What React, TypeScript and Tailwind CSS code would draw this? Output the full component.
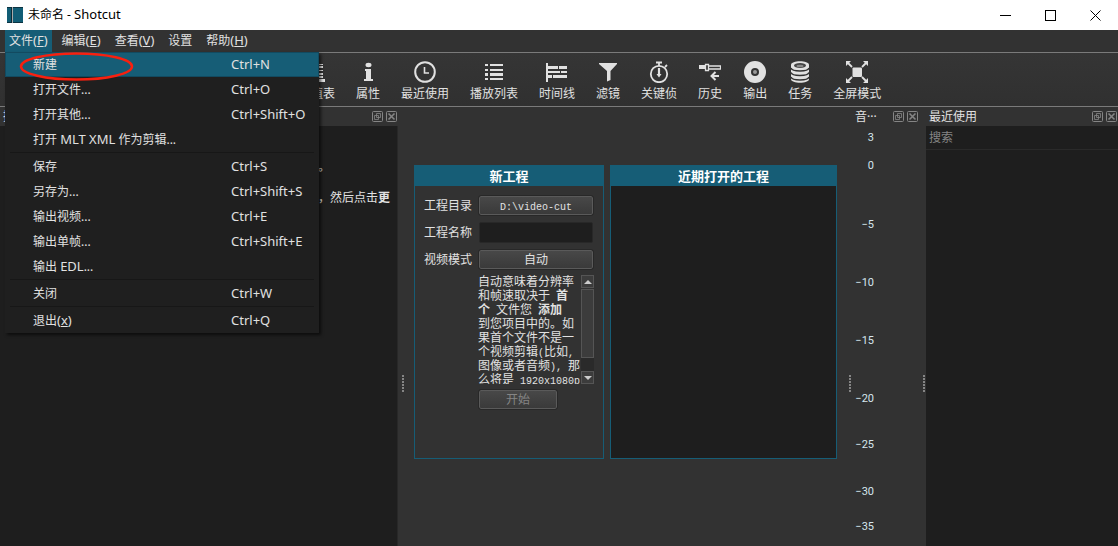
import type { ReactNode } from 'react'

interface MenuEntry {
  label: ReactNode
  shortcut?: string
  mnemonic?: string
}

// Latin runs are set one pixel larger than the Chinese text around them
function Latin({ children }: { children: ReactNode }) {
  return <span className="text-[13px] leading-none">{children}</span>
}

function Mono({ children }: { children: ReactNode }) {
  return <span className="whitespace-pre font-['Liberation_Mono',monospace] text-[10px] leading-none">{children}</span>
}

const menuBar = [
  { label: '文件', key: 'F' },
  { label: '编辑', key: 'E' },
  { label: '查看', key: 'V' },
  { label: '设置' },
  { label: '帮助', key: 'H' }
]

const fileMenu: MenuEntry[][] = [
  [
    { label: '新建', shortcut: 'Ctrl+N' },
    { label: '打开文件...', shortcut: 'Ctrl+O' },
    { label: '打开其他...', shortcut: 'Ctrl+Shift+O' },
    { label: <>打开 <Latin>MLT XML</Latin> 作为剪辑...</> }
  ],
  [
    { label: '保存', shortcut: 'Ctrl+S' },
    { label: '另存为...', shortcut: 'Ctrl+Shift+S' },
    { label: '输出视频...', shortcut: 'Ctrl+E' },
    { label: '输出单帧...', shortcut: 'Ctrl+Shift+E' },
    { label: <>输出 <Latin>EDL</Latin>...</> }
  ],
  [{ label: '关闭', shortcut: 'Ctrl+W' }],
  [{ label: '退出', mnemonic: 'x', shortcut: 'Ctrl+Q' }]
]

const fill = '#e1e1e1'

const tools: { label: string; icon: ReactNode }[] = [
  {
    label: '峰值表',
    icon: <path d="M3 3h5v2H3zM3 7h5v2H3zM3 11h5v2H3zM3 15h5v2H3zM12 3h5v1h-5zM12 5h5v2h-5zM12 9h5v1h-5zM12 12h5v2h-5zM12 15h5v2h-5zM2 18h17v3H2z" />
  },
  {
    label: '属性',
    icon: <><ellipse cx="11.500" cy="4" rx="3" ry="2.200" /><path d="M8 8h6v10h2v2H7v-2h2v-8H8z" /></>
  },
  {
    label: '最近使用',
    icon: <g fill="none" stroke={fill} strokeWidth="2"><circle cx="11" cy="11" r="9.800" /><path d="M10.500 6v6H15" strokeWidth="1.600" /></g>
  },
  {
    label: '播放列表',
    icon: <path d="M2 3h3v2H2zM7 3h13v2H7zM2 8h3v2H2zM7 8h13v2H7zM2 12h3v3H2zM7 12h13v3H7zM2 17h3v2H2zM7 17h13v2H7z" />
  },
  {
    label: '时间线',
    icon: <path d="M0 2h2v19H0zM2 5h10v3H2zM13 5h8v3h-8zM2 10h12v2H2zM15 10h6v2h-6zM2 14h4v3H2zM7 14h14v3H7z" />
  },
  { label: '滤镜', icon: <path d="M2 2h18v1l-6.500 7v9L10 20.500V10L2 3z" /> },
  {
    label: '关键侦',
    icon: (
      <g fill="none" stroke={fill} strokeWidth="1.800">
        <circle cx="11" cy="13" r="8.200" />
        <path d="M8 1.500h6M11 2v3M17 6l2-2" />
        <path d="M11 7v7" strokeWidth="2.200" />
        <path d="M8.500 13h5L11 16.500z" fill={fill} stroke="none" />
      </g>
    )
  },
  {
    label: '历史',
    icon: (
      <>
        <path d="M0 4h6v4H0z" />
        <path d="M6.500 3.500h3v6h-3zM9.500 5h12v3h-12z" fill="none" stroke={fill} strokeWidth="1.300" />
        <path d="M20 15h-7M16.500 11L12.500 15l4 4" fill="none" stroke={fill} strokeWidth="2" />
      </>
    )
  },
  {
    label: '输出',
    icon: <><circle cx="11" cy="11" r="11" /><circle cx="11" cy="11" r="4" fill="#333" /><circle cx="11" cy="11" r="2" fill="#999" /></>
  },
  {
    label: '任务',
    icon: (
      <>
        <path d="M2 4c0-5 18-5 18 0v14c0 5-18 5-18 0z" />
        <ellipse cx="11" cy="4.500" rx="6" ry="2.500" fill="#444" />
        <ellipse cx="11" cy="5" rx="3.500" ry="1.200" fill="#888" />
        <path d="M2 7c1 4 17 4 18 0M2 11.500c1 4 17 4 18 0M2 16c1 4 17 4 18 0" fill="none" stroke="#333" strokeWidth="1.300" />
      </>
    )
  },
  {
    label: '全屏模式',
    icon: (
      <>
        <rect x="6.500" y="6.500" width="9.500" height="9.500" rx="1" />
        <path d="M2 2l4 4M20 2l-4 4M2 20l4-4M20 20l-4-4" stroke={fill} strokeWidth="1.800" />
        <path d="M0 0h5L0 5zM22 0v5l-5-5zM0 22v-5l5 5zM22 22h-5l5-5z" />
      </>
    )
  }
]

// dB label and the height of the row it occupies
const meterMarks = [
  { db: '3', row: 'h-[28px]' },
  { db: '0', row: 'h-[59px]' },
  { db: '−5', row: 'h-[58px]' },
  { db: '−10', row: 'h-[58px]' },
  { db: '−15', row: 'h-[58px]' },
  { db: '−20', row: 'h-[46px]' },
  { db: '−25', row: 'h-[47px]' },
  { db: '−30', row: 'h-[35px]' },
  { db: '−35', row: 'h-[18px]' }
]

const pushButton =
  'h-[19px] rounded-[2px] border border-[#5a5a5a] bg-linear-to-b from-[#484848] to-[#3a3a3a] outline outline-[#282828] text-center leading-[17px]'

function DockButtons() {
  return (
    <div className="flex gap-[3px] text-[#858585]">
      <button aria-label="浮动">
        <svg className="block size-[11px]" viewBox="0 0 11 11" fill="none" stroke="currentColor">
          <rect x="0.5" y="0.5" width="10" height="10" rx="1" />
          <path d="M4.500 2.500h4v4h-4zM2.500 4.500h4v4h-4z" strokeWidth="0.800" />
        </svg>
      </button>
      <button aria-label="关闭">
        <svg className="block size-[11px]" viewBox="0 0 11 11" fill="none" stroke="currentColor">
          <rect x="0.5" y="0.5" width="10" height="10" rx="1" />
          <path d="M2.500 2.500l6 6M8.500 2.500l-6 6" strokeWidth="1.600" />
        </svg>
      </button>
    </div>
  )
}

function DockTitle({ title }: { title: string }) {
  return (
    <div className="flex h-[19px] items-center justify-between pl-[3px] pr-px">
      <h2 className="whitespace-nowrap">{title}</h2>
      <DockButtons />
    </div>
  )
}

function Grip() {
  return (
    <div className="flex w-1 shrink-0 flex-col items-center gap-px pt-[268px]">
      {[0, 1, 2, 3, 4, 5].map((i) => (
        <span key={i} className="size-[2px] bg-[#858585]" />
      ))}
    </div>
  )
}

function FileMenu() {
  return (
    <div
      role="menu"
      className="absolute left-0 top-full z-10 w-[314px] bg-[#1f1f1f] shadow-[2px_2px_3px_rgba(0,0,0,0.6)]"
    >
      {fileMenu.map((group, g) => (
        <div key={g}>
          {g > 0 && <div className="mx-[5px] h-[2px] border-t border-[#171717]" />}
          {group.map((item, i) => (
            <button
              key={i}
              role="menuitem"
              className={`flex h-[25px] w-full items-center text-left ${
                g === 0 && i === 0 ? 'border border-[#124a60] bg-[#165d76] pl-[27px]' : 'pl-7'
              }`}
            >
              <span className="w-[198px]">
                {item.label}
                {item.mnemonic && <Latin>(<u>{item.mnemonic}</u>)</Latin>}
              </span>
              {item.shortcut && <Latin>{item.shortcut}</Latin>}
            </button>
          ))}
        </div>
      ))}
      {/* hand-drawn highlight around 新建 */}
      <svg className="pointer-events-none absolute left-[14px] top-0 h-[30px] w-[115px]" viewBox="0 0 115 30" fill="none">
        <ellipse cx="57.500" cy="14.500" rx="55.500" ry="13" stroke="#f8200f" strokeWidth="2.500" />
      </svg>
    </div>
  )
}

function NewProject() {
  return (
    <form className="flex w-[190px] flex-col border border-[#165d76]">
      <h2 className="h-5 bg-[#165d76] text-center text-[13px] font-bold leading-5 text-white">新工程</h2>
      <div className="grid grid-cols-[48px_114px] items-center gap-[7px] pl-[9px] pt-[10px]">
        <label htmlFor="folder">工程目录</label>
        <button id="folder" type="button" className={pushButton}>
          <Mono>D:\video-cut</Mono>
        </button>
        <label htmlFor="name">工程名称</label>
        <input id="name" className="h-[21px] w-full rounded-[2px] border border-[#282828] bg-[#1e1e1e] px-1" />
        <label htmlFor="mode">视频模式</label>
        <button id="mode" type="button" className={pushButton}>自动</button>
      </div>
      <div className="ml-[63px] mt-[6px] flex h-[109px] w-[116px] overflow-hidden">
        <p className="w-[103px] whitespace-nowrap leading-[14px]">
          自动意味着分辨率<br />
          和帧速取决于<Mono> </Mono><b>首</b><br />
          <b>个</b><Mono> </Mono>文件您<Mono> </Mono><b>添加</b><br />
          到您项目中的。如<br />
          果首个文件不是一<br />
          个视频剪辑<Mono>(</Mono>比如<Mono>,</Mono><br />
          图像或者音频<Mono>), </Mono>那<br />
          么将是<Mono> 1920x1080p</Mono>
        </p>
        <div className="flex w-[13px] shrink-0 flex-col">
          <button type="button" aria-label="向上" className="flex h-[13px] items-center justify-center border border-[#555] bg-[#3c3c3c]">
            <svg className="h-1 w-2" viewBox="0 0 8 4" fill="#ccc"><path d="M4 0l4 4H0z" /></svg>
          </button>
          <div className="mt-px h-[69px] border border-[#555] bg-[#3c3c3c]" />
          <div className="flex-1 bg-[#2a2a2a]" />
          <button type="button" aria-label="向下" className="flex h-[13px] items-center justify-center border border-[#555] bg-[#3c3c3c]">
            <svg className="h-1 w-2" viewBox="0 0 8 4" fill="#ccc"><path d="M4 4l4-4H0z" /></svg>
          </button>
        </div>
      </div>
      <button type="button" disabled className={`${pushButton} ml-16 mt-[6px] w-[78px] text-[#858585]`}>开始</button>
    </form>
  )
}

export default function App() {
  return (
    <div className="flex h-screen flex-col overflow-hidden bg-[#323232] font-['Noto_Sans','Noto_Sans_CJK_SC',sans-serif] text-[12px] leading-[18px] text-[#e1e1e1]">
      <header className="flex h-[30px] shrink-0 items-center bg-white pl-[7px] text-black">
        <svg className="size-4" viewBox="0 0 16 16">
          <rect width="16" height="16" fill="#115d75" />
          <path d="M0 0h16v1H0zM0 15h16v1H0z" fill="#0b3342" />
          <path d="M4 0h2v16H4z" fill="#0b2a36" />
          <path d="M5 0h1v16H5z" fill="#aaa" />
        </svg>
        <h1 className="ml-[5px] flex-1">未命名 - <Latin>Shotcut</Latin></h1>
        <button aria-label="最小化" className="flex w-[45px] justify-center">
          <svg className="size-[11px]" viewBox="0 0 11 11" stroke="#000"><path d="M0 5.500h11" /></svg>
        </button>
        <button aria-label="最大化" className="flex w-[45px] justify-center">
          <svg className="size-[11px]" viewBox="0 0 11 11" fill="none" stroke="#000"><rect x="0.5" y="0.5" width="10" height="10" /></svg>
        </button>
        <button aria-label="关闭窗口" className="flex w-[45px] justify-center">
          <svg className="size-[11px]" viewBox="0 0 11 11" stroke="#000"><path d="M0.500 0.500l10 10M10.500 0.500l-10 10" /></svg>
        </button>
      </header>

      <nav className="flex h-[22px] shrink-0 gap-[6px] pl-[5px]">
        {menuBar.map((m, i) => (
          <div key={m.label} className="relative">
            <button className={`h-[22px] whitespace-nowrap px-1 ${i === 0 ? 'bg-[#165d76]' : ''}`}>
              {m.label}
              {m.key && <Latin>(<u>{m.key}</u>)</Latin>}
            </button>
            {i === 0 && <FileMenu />}
          </div>
        ))}
      </nav>

      <div className="flex h-[55px] shrink-0 gap-[21px] border-y border-[#7a7a7a] bg-linear-to-b from-[#353535] to-[#303030] pl-[299px] pt-2">
        {tools.map((t) => (
          <button key={t.label} className="flex flex-col items-center gap-[2px] whitespace-nowrap">
            <svg className="size-[22px] shrink-0" viewBox="0 0 22 22" fill={fill}>{t.icon}</svg>
            <span>{t.label}</span>
          </button>
        ))}
      </div>

      <main className="flex min-h-0 flex-1">
        <section className="flex w-[401px] shrink-0 flex-col pr-[3px]">
          <DockTitle title="摄" />
          <div className="flex-1 border-r border-[#282828] bg-[#1e1e1e] pl-[318px] pt-8">
            <p className="h-[31px]">。</p>
            <p className="whitespace-nowrap">，然后点击<b>更</b></p>
          </div>
        </section>
        <Grip />

        <section className="flex flex-1 pl-[9px] pt-[58px]">
          <div className="flex h-[294px] flex-1 gap-[6px]">
            <NewProject />
            <div className="flex flex-1 flex-col border border-[#165d76] bg-[#1e1e1e]">
              <h2 className="h-5 bg-[#165d76] text-center text-[13px] font-bold leading-5 text-white">近期打开的工程</h2>
            </div>
          </div>
        </section>

        <div className="w-[11px] shrink-0" />
        <Grip />
        <section className="w-[70px] shrink-0 pr-[3px]">
          <DockTitle title="音···" />
          <div className="w-[22px] pt-[3px] text-right font-['Roboto'] text-[11px] text-[#d5e6ee]">
            {meterMarks.map((m) => (
              <div key={m.db} className={m.row}>{m.db}</div>
            ))}
          </div>
        </section>

        <Grip />
        <section className="flex w-[192px] shrink-0 flex-col">
          <DockTitle title="最近使用" />
          <input aria-label="搜索" placeholder="搜索" className="h-6 border-b border-[#2a2a2a] bg-[#1e1e1e] px-[3px] placeholder:text-[#858585]" />
          <div className="flex-1 bg-[#1e1e1e]" />
        </section>
      </main>
    </div>
  )
}
